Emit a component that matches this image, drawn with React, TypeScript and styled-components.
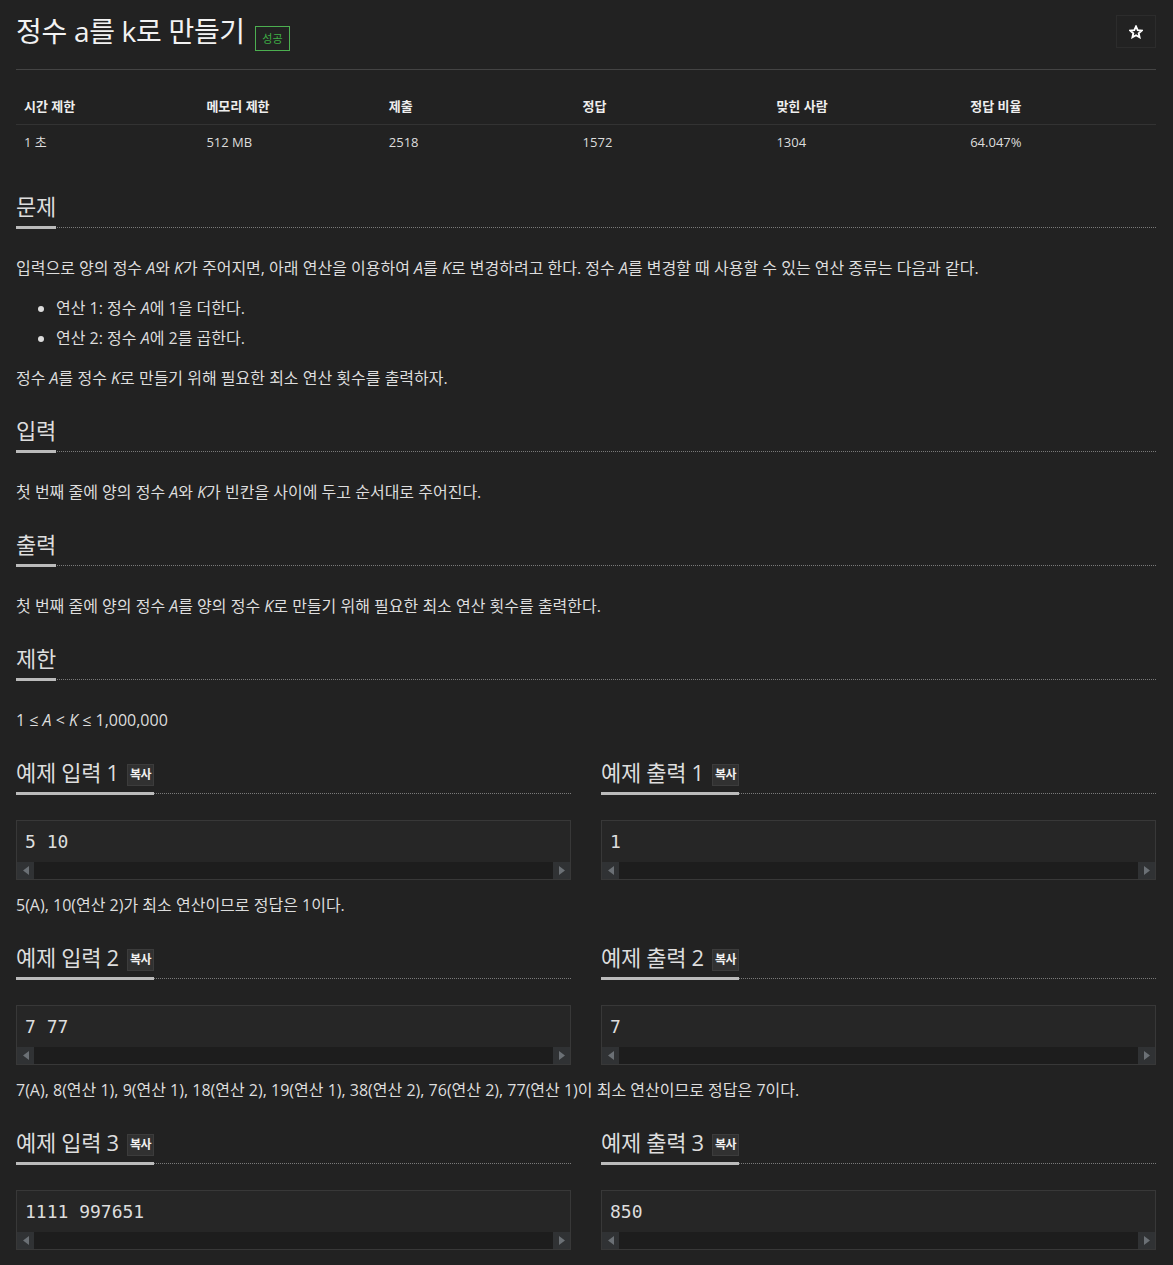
import React from 'react';
import styled, { createGlobalStyle } from 'styled-components';

const GlobalStyle = createGlobalStyle`
  html, body { margin: 0; padding: 0; background: #222; }
  body {
    font-family: "Open Sans", "Noto Sans CJK KR", sans-serif;
    color: #ddd;
  }
  * { box-sizing: border-box; }
`;

const Page = styled.div`
  padding: 15px 17px 20px 16px;
`;

const TitleRow = styled.div`
  display: flex;
  align-items: center;
  justify-content: space-between;
  height: 33px;
`;

const TitleGroup = styled.div`
  display: flex;
  align-items: center;
  gap: 10px;
`;

const Title = styled.h1`
  margin: 0;
  font-size: 28px;
  font-weight: 400;
  line-height: 33px;
  color: #f2f2f2;
  letter-spacing: -0.3px;
`;

const Badge = styled.span`
  margin-top: 13px;
  display: inline-block;
  height: 25px;
  line-height: 23px;
  padding: 0 6.5px;
  border: 1px solid #4caf50;
  color: #3fae45;
  font-size: 11px;
`;

const StarButton = styled.button`
  width: 40px;
  height: 33px;
  display: flex;
  align-items: center;
  justify-content: center;
  background: transparent;
  border: 1px solid #2c2c2c;
  padding: 0;
`;

const Rule = styled.hr`
  margin: 21px 0 0 0;
  border: 0;
  border-top: 1px solid #444;
`;

const InfoTable = styled.table`
  margin-top: 19px;
  width: 100%;
  border-collapse: collapse;
  table-layout: fixed;
  font-size: 13px;
`;

const Th = styled.th<{ $w: number }>`
  width: ${(p) => p.$w}%;
  text-align: left;
  padding: 8px;
  line-height: 19px;
  font-weight: 700;
  color: #eee;
  border-bottom: 1px solid #333;
`;

const Td = styled.td`
  padding: 8px;
  line-height: 19px;
  color: #ddd;
`;

const Section = styled.section<{ $first?: boolean }>`
  display: flow-root;
  margin-top: ${(p) => (p.$first ? '34px' : '15px')};
`;

const Headline = styled.div`
  display: flex;
  align-items: flex-end;
  border-bottom: 1px dotted #7a7a7a;
`;

const HeadTitle = styled.h2`
  margin: 0 0 -2px 0;
  padding-bottom: 8px;
  display: flex;
  align-items: center;
  gap: 8px;
  font-size: 22px;
  font-weight: 400;
  line-height: 24px;
  color: #ddd;
  border-bottom: 3px solid #bbb;
  letter-spacing: -0.3px;
`;

const CopyButton = styled.span`
  margin: 4px 0 -2px 0;
  height: 22px;
  line-height: 20px;
  padding: 0 2px;
  background: #313131;
  border: 1px solid #3c3c3c;
  font-size: 12px;
  font-weight: 700;
  color: #f2f2f2;
  letter-spacing: -0.5px;
`;

const Content = styled.div<{ $gap?: number }>`
  display: flow-root;
  margin-top: ${(p) => p.$gap ?? 25}px;
`;

const Para = styled.p`
  margin: 0 0 10px 0;
  font-size: 16px;
  line-height: 30px;
`;

const List = styled.ul`
  margin: 0 0 10px 0;
  padding-left: 40px;
  font-size: 16px;
  line-height: 30px;
`;

const V = styled.i`
  font-style: italic;
`;

const SampleRow = styled.div`
  display: grid;
  grid-template-columns: 1fr 1fr;
  column-gap: 30px;
`;

const SampleBox = styled.div`
  margin-bottom: 10px;
  border: 1px solid #383838;
  background: #262626;
`;

const Pre = styled.pre`
  margin: 0;
  padding: 10px 8px;
  font-family: "DejaVu Sans Mono", "Liberation Mono", monospace;
  font-size: 18px;
  line-height: 21px;
  color: #ddd;
`;

const ScrollBar = styled.div`
  display: flex;
  height: 17px;
  background: #1d1d1d;
`;

const ScrollArrow = styled.div`
  width: 17px;
  height: 17px;
  background: #303234;
  display: flex;
  align-items: center;
  justify-content: center;
`;

const ScrollTrack = styled.div`
  flex: 1;
`;

const Star = () => (
  <svg width="14" height="14" viewBox="0 0 24 24">
    <polygon
      points="12,2.5 14.9,8.9 21.8,9.6 16.6,14.2 18.1,21 12,17.5 5.9,21 7.4,14.2 2.2,9.6 9.1,8.9"
      fill="none"
      stroke="#fff"
      strokeWidth="3.2"
      strokeLinejoin="miter"
    />
  </svg>
);

const Arrow = ({ dir }: { dir: 'left' | 'right' }) => (
  <svg width="6" height="9" viewBox="0 0 6 9">
    <polygon points={dir === 'left' ? '6,0 0,4.5 6,9' : '0,0 6,4.5 0,9'} fill="#6b7075" />
  </svg>
);

const Sample = ({ text }: { text: string }) => (
  <SampleBox>
    <Pre>{text}</Pre>
    <ScrollBar>
      <ScrollArrow>
        <Arrow dir="left" />
      </ScrollArrow>
      <ScrollTrack />
      <ScrollArrow>
        <Arrow dir="right" />
      </ScrollArrow>
    </ScrollBar>
  </SampleBox>
);

const Heading = ({ title, copy }: { title: string; copy?: boolean }) => (
  <Headline>
    <HeadTitle>
      {title}
      {copy && <CopyButton>복사</CopyButton>}
    </HeadTitle>
  </Headline>
);

const samples = [
  {
    n: 1,
    input: '5 10',
    output: '1',
    explain: '5(A), 10(연산 2)가 최소 연산이므로 정답은 1이다.',
  },
  {
    n: 2,
    input: '7 77',
    output: '7',
    explain:
      '7(A), 8(연산 1), 9(연산 1), 18(연산 2), 19(연산 1), 38(연산 2), 76(연산 2), 77(연산 1)이 최소 연산이므로 정답은 7이다.',
  },
  { n: 3, input: '1111 997651', output: '850', explain: '' },
];

const info = [
  ['시간 제한', '1 초', 16],
  ['메모리 제한', '512 MB', 16],
  ['제출', '2518', 17],
  ['정답', '1572', 17],
  ['맞힌 사람', '1304', 17],
  ['정답 비율', '64.047%', 17],
] as const;

export default function App() {
  return (
    <Page>
      <GlobalStyle />
      <TitleRow>
        <TitleGroup>
          <Title>정수 a를 k로 만들기</Title>
          <Badge>성공</Badge>
        </TitleGroup>
        <StarButton aria-label="star">
          <Star />
        </StarButton>
      </TitleRow>
      <Rule />

      <InfoTable>
        <thead>
          <tr>
            {info.map(([h, , w]) => (
              <Th key={h} $w={w}>
                {h}
              </Th>
            ))}
          </tr>
        </thead>
        <tbody>
          <tr>
            {info.map(([h, v]) => (
              <Td key={h}>{v}</Td>
            ))}
          </tr>
        </tbody>
      </InfoTable>

      <Section $first>
        <Heading title="문제" />
        <Content>
          <Para>
            입력으로 양의 정수 <V>A</V>와 <V>K</V>가 주어지면, 아래 연산을 이용하여 <V>A</V>를 <V>K</V>로
            변경하려고 한다. 정수 <V>A</V>를 변경할 때 사용할 수 있는 연산 종류는 다음과 같다.
          </Para>
          <List>
            <li>
              연산 1: 정수 <V>A</V>에 1을 더한다.
            </li>
            <li>
              연산 2: 정수 <V>A</V>에 2를 곱한다.
            </li>
          </List>
          <Para>
            정수 <V>A</V>를 정수 <V>K</V>로 만들기 위해 필요한 최소 연산 횟수를 출력하자.
          </Para>
        </Content>
      </Section>

      <Section>
        <Heading title="입력" />
        <Content>
          <Para>
            첫 번째 줄에 양의 정수 <V>A</V>와 <V>K</V>가 빈칸을 사이에 두고 순서대로 주어진다.
          </Para>
        </Content>
      </Section>

      <Section>
        <Heading title="출력" />
        <Content>
          <Para>
            첫 번째 줄에 양의 정수 <V>A</V>를 양의 정수 <V>K</V>로 만들기 위해 필요한 최소 연산 횟수를
            출력한다.
          </Para>
        </Content>
      </Section>

      <Section>
        <Heading title="제한" />
        <Content>
          <Para>
            1 ≤ <V>A</V> &lt; <V>K</V> ≤ 1,000,000
          </Para>
        </Content>
      </Section>

      {samples.map((s) => (
        <Section key={s.n}>
          <SampleRow>
            <div>
              <Heading title={`예제 입력 ${s.n}`} copy />
              <Content $gap={26}>
                <Sample text={s.input} />
              </Content>
            </div>
            <div>
              <Heading title={`예제 출력 ${s.n}`} copy />
              <Content $gap={26}>
                <Sample text={s.output} />
              </Content>
            </div>
          </SampleRow>
          {s.explain && <Para>{s.explain}</Para>}
        </Section>
      ))}
    </Page>
  );
}
